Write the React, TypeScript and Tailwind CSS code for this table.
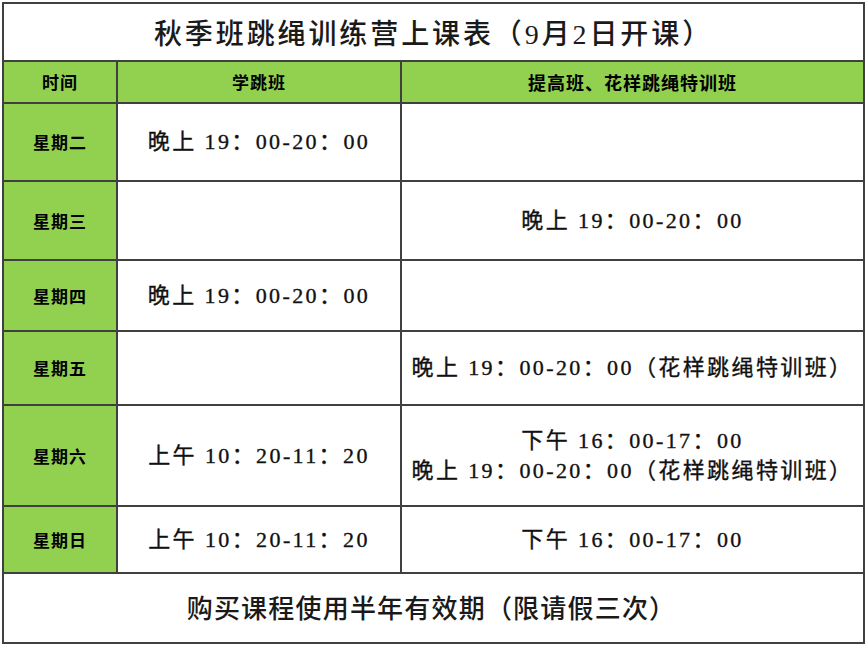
const BODY_FONT = "font-['Liberation_Serif','Noto_Sans_CJK_SC',serif]";

type Row = { day: string; h: number; learn: string[]; advanced: string[] };

const ROWS: Row[] = [
  { day: "星期二", h: 78, learn: ["晚上 19：00-20：00"], advanced: [] },
  { day: "星期三", h: 79, learn: [], advanced: ["晚上 19：00-20：00"] },
  { day: "星期四", h: 71, learn: ["晚上 19：00-20：00"], advanced: [] },
  { day: "星期五", h: 74, learn: [], advanced: ["晚上 19：00-20：00（花样跳绳特训班）"] },
  {
    day: "星期六",
    h: 101,
    learn: ["上午 10：20-11：20"],
    advanced: ["下午 16：00-17：00", "晚上 19：00-20：00（花样跳绳特训班）"],
  },
  { day: "星期日", h: 67, learn: ["上午 10：20-11：20"], advanced: ["下午 16：00-17：00"] },
];

const cell = "border-2 border-[#404040] text-center align-middle p-0";
const green = "bg-[#92d050]";
const headText = "font-['Noto_Sans_CJK_SC',sans-serif] font-bold text-[17px] tracking-[1px] text-black";

function Times({ lines }: { lines: string[] }) {
  return (
    <div className={`${BODY_FONT} font-normal text-[22px] tracking-[2.4px] leading-[30px] text-[#111] [-webkit-text-stroke:0.35px_#111] flex flex-col items-center`}>
      {lines.map((l) => (
        <span key={l} className="whitespace-nowrap">{l}</span>
      ))}
    </div>
  );
}

export default function App() {
  return (
    <div className="w-[865px] h-[650px] bg-white overflow-hidden pt-[2px] pl-[2px]">
      <table className="border-collapse table-fixed w-[861px]">
        <colgroup>
          <col className="w-[114px]" />
          <col className="w-[284px]" />
          <col className="w-[463px]" />
        </colgroup>
        <tbody>
          <tr className="h-[58px]">
            <td colSpan={3} className={cell}>
              <div className={`${BODY_FONT} font-medium text-[28px] tracking-[2.9px] text-[#1a1a1a] pt-[6px]`}>
                秋季班跳绳训练营上课表（9月2日开课）
              </div>
            </td>
          </tr>
          <tr className={`h-[42px] ${green}`}>
            <td className={cell}><span className={headText}>时间</span></td>
            <td className={cell}><span className={headText}>学跳班</span></td>
            <td className={cell}><span className={`${headText} text-[18px]`}>提高班、花样跳绳特训班</span></td>
          </tr>
          {ROWS.map((r) => (
            <tr key={r.day} style={{ height: r.h }}>
              <td className={`${cell} ${green}`}>
                <span className={headText}>{r.day}</span>
              </td>
              <td className={cell}>
                <Times lines={r.learn} />
              </td>
              <td className={cell}>
                <Times lines={r.advanced} />
              </td>
            </tr>
          ))}
          <tr className="h-[70px]">
            <td colSpan={3} className={cell}>
              <div className={`${BODY_FONT} font-medium text-[26px] tracking-[1.2px] text-[#1a1a1a] pt-[2px] pr-[4px]`}>
                购买课程使用半年有效期（限请假三次）
              </div>
            </td>
          </tr>
        </tbody>
      </table>
    </div>
  );
}
